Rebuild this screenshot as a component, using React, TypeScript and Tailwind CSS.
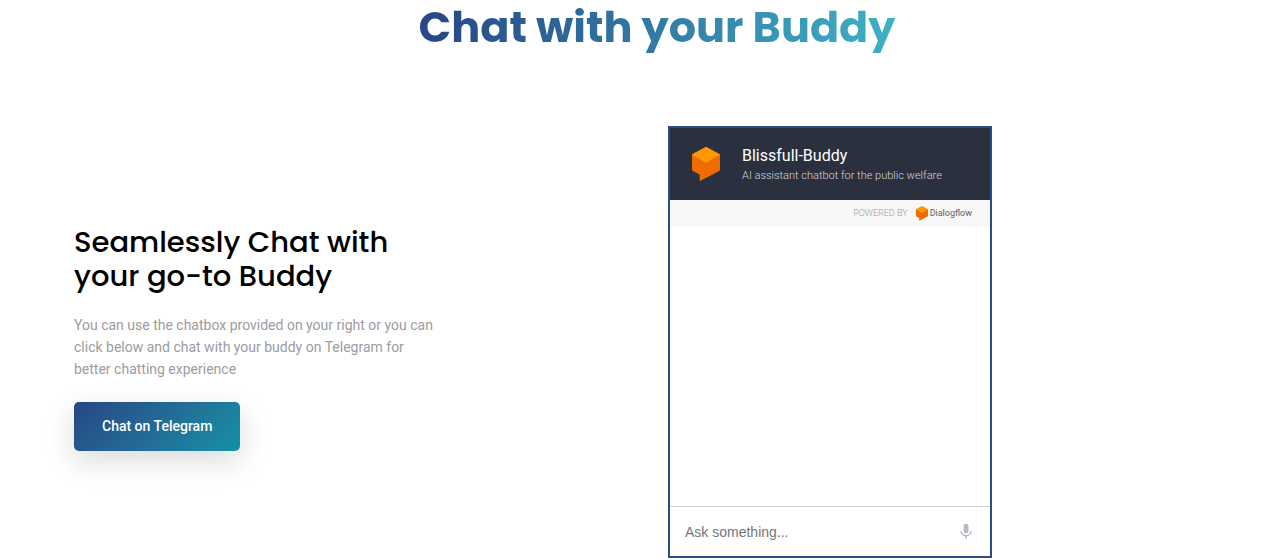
import React from "react";

function DialogflowMark({ className }: { className: string }) {
  return (
    <svg viewBox="0 0 28 34" className={className} aria-hidden="true">
      <path d="M14 0 L27.3 7 Q28 7.4 28 8.2 V22.6 Q28 23.5 27.2 24 L9 33.6 Q7.6 34.3 7.6 32.9 V27.6 L.8 24 Q0 23.5 0 22.6 V8.2 Q0 7.4.7 7Z" fill="#ef6c00" />
      <path d="M13.2.3 Q14-.1 14.8.3 L27.3 7 Q27.8 7.3 27.9 7.8 L14.8 15.3 Q14 15.7 13.2 15.3 L.1 7.8 Q.2 7.3.7 7Z" fill="#ff9800" />
    </svg>
  );
}

function MicIcon() {
  return (
    <svg viewBox="0 0 24 24" className="size-[18px]" fill="#b4bbc4" aria-hidden="true">
      <path d="M12 14c1.9 0 3.3-1.34 3.3-3.3V4.3C15.3 2.34 13.9 1 12 1S8.7 2.34 8.7 4.3v6.4c0 1.96 1.4 3.3 3.3 3.3z" />
      <path d="M17.8 10.7c0 3.2-2.8 5.4-5.8 5.4s-5.8-2.2-5.8-5.4H4.4c0 3.6 3 6.6 6.6 7.1V21h2v-3.2c3.6-.5 6.6-3.5 6.6-7.1h-1.8z" />
    </svg>
  );
}

function ChatWidget() {
  return (
    <section className="flex h-[432px] w-[324px] flex-col border-2 border-[#274e8b] bg-white">
      <header className="flex h-[72px] shrink-0 items-center bg-[#2b303f] pl-[22px]">
        <DialogflowMark className="h-[34px] w-7" />
        <div className="ml-[22px] pt-1">
          <h3 className="text-base leading-5 text-white">Blissfull-Buddy</h3>
          <p className="text-[11px] font-light leading-5 text-[#d4d6dc]">AI assistant chatbot for the public welfare</p>
        </div>
      </header>
      <div className="flex h-[27px] shrink-0 items-center justify-end bg-[#f7f7f7] pr-[18px]">
        <span className="mr-2 text-[9px] font-light text-[#999da3]">POWERED BY</span>
        <DialogflowMark className="h-[15px] w-3" />
        <span className="ml-0.5 text-[9px] text-[#616161]">Dialogflow</span>
      </div>
      <div className="flex-1" />
      <form className="flex h-[50px] shrink-0 items-center border-t border-[#cfcfcf] px-[15px]" onSubmit={(e) => e.preventDefault()}>
        <input
          type="text"
          aria-label="Ask something"
          placeholder="Ask something..."
          className="min-w-0 flex-1 bg-transparent font-['Liberation_Sans',sans-serif] text-sm text-black outline-none placeholder:text-[#757575]"
        />
        <button type="button" aria-label="Speak">
          <MicIcon />
        </button>
      </form>
    </section>
  );
}

export default function App() {
  return (
    <main className="bg-white font-[Roboto,sans-serif]">
      <div className="flex justify-center pl-9">
        <h1 className="bg-linear-to-r from-[#274685] to-[#3fb1c5] bg-clip-text font-[Poppins,Inter,sans-serif] text-[43px] font-bold leading-[54px] text-transparent">
          Chat with your Buddy
        </h1>
      </div>
      <div className="grid grid-cols-2 items-center pb-0.5 pl-[74px] pr-4 pt-[72px]">
        <div className="max-w-[365px] pb-2">
          <h2 className="max-w-[350px] font-[Poppins,Inter,sans-serif] text-[29px] font-medium leading-[34px] text-black">
            Seamlessly Chat with your go-to Buddy
          </h2>
          <p className="mt-[21px] text-sm leading-[22px] text-[#9d9b9f]">
            You can use the chatbox provided on your right or you can click below and chat with your buddy on Telegram for better chatting experience
          </p>
          <a
            href="#telegram"
            className="mt-[22px] inline-flex h-[49px] items-center rounded-[5px] bg-linear-135 from-[#274685] to-[#1391a5] px-7 pb-0.5 text-sm font-medium text-white shadow-[0_10px_30px_rgba(0,0,0,0.15)]"
          >
            Chat on Telegram
          </a>
        </div>
        <ChatWidget />
      </div>
    </main>
  );
}
